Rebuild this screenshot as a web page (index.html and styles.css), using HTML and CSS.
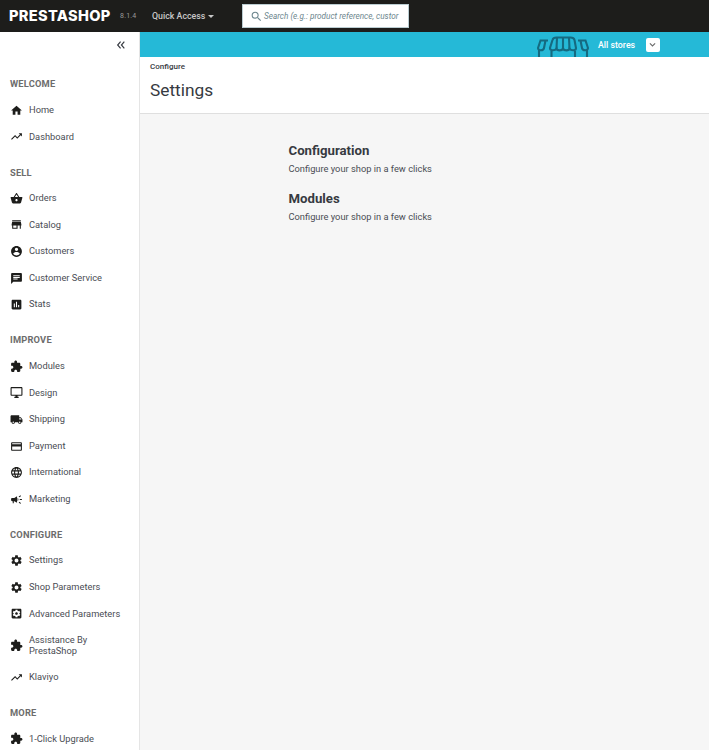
FILE: index.html
```html
<!DOCTYPE html>
<html lang="en">
<head>
  <meta charset="utf-8">
  <title>Settings</title>
  <link rel="stylesheet" href="styles.css">
</head>
<body>

<svg class="icon-defs" width="0" height="0">
  <symbol id="i-home" viewBox="0 0 24 24"><path d="M10 20v-6h4v6h5v-8h3L12 3 2 12h3v8z"/></symbol>
  <symbol id="i-trend" viewBox="0 0 24 24"><path d="M16 6l2.29 2.29-4.88 4.88-4-4L2 16.59 3.41 18l6-6 4 4 6.3-6.29L22 12V6z"/></symbol>
  <symbol id="i-basket" viewBox="0 0 24 24"><path d="M17.21 9l-4.38-6.56c-.19-.28-.51-.42-.83-.42-.32 0-.64.14-.83.43L6.79 9H2c-.55 0-1 .45-1 1 0 .09.01.18.04.27l2.54 9.27c.23.84 1 1.46 1.92 1.46h13c.92 0 1.69-.62 1.93-1.46l2.54-9.27L23 10c0-.55-.45-1-1-1h-4.79zM9 9l3-4.4L15 9H9zm3 8c-1.1 0-2-.9-2-2s.9-2 2-2 2 .9 2 2-.9 2-2 2z"/></symbol>
  <symbol id="i-store" viewBox="0 0 24 24"><path d="M20 4H4v2h16V4zm1 10v-2l-1-5H4l-1 5v2h1v6h10v-6h4v6h2v-6h1zm-9 4H6v-4h6v4z"/></symbol>
  <symbol id="i-account" viewBox="0 0 24 24"><path d="M12 2C6.48 2 2 6.48 2 12s4.48 10 10 10 10-4.48 10-10S17.52 2 12 2zm0 3c1.66 0 3 1.34 3 3s-1.34 3-3 3-3-1.34-3-3 1.34-3 3-3zm0 14.2c-2.5 0-4.71-1.28-6-3.22.03-1.99 4-3.08 6-3.08 1.99 0 5.97 1.09 6 3.08-1.29 1.94-3.5 3.22-6 3.22z"/></symbol>
  <symbol id="i-chat" viewBox="0 0 24 24"><path d="M20 2H4c-1.1 0-1.99.9-1.99 2L2 22l4-4h14c1.1 0 2-.9 2-2V4c0-1.1-.9-2-2-2zM6 9h12v2H6V9zm8 5H6v-2h8v2zm4-6H6V6h12v2z"/></symbol>
  <symbol id="i-stats" viewBox="0 0 24 24"><path d="M19 3H5c-1.1 0-2 .9-2 2v14c0 1.1.9 2 2 2h14c1.1 0 2-.9 2-2V5c0-1.1-.9-2-2-2zM9 17H7v-7h2v7zm4 0h-2V7h2v10zm4 0h-2v-4h2v4z"/></symbol>
  <symbol id="i-extension" viewBox="0 0 24 24"><path d="M20.5 11H19V7c0-1.1-.9-2-2-2h-4V3.5C13 2.12 11.88 1 10.5 1S8 2.12 8 3.5V5H4c-1.1 0-1.99.9-1.99 2v3.8H3.5c1.49 0 2.7 1.21 2.7 2.7s-1.21 2.7-2.7 2.7H2V20c0 1.1.9 2 2 2h3.8v-1.5c0-1.49 1.21-2.7 2.7-2.7 1.49 0 2.7 1.21 2.7 2.7V22H17c1.1 0 2-.9 2-2v-4h1.5c1.38 0 2.5-1.12 2.5-2.5S21.88 11 20.5 11z"/></symbol>
  <symbol id="i-desktop" viewBox="0 0 24 24"><path d="M21 2H3c-1.1 0-2 .9-2 2v12c0 1.1.9 2 2 2h7v2H8v2h8v-2h-2v-2h7c1.1 0 2-.9 2-2V4c0-1.1-.9-2-2-2zm0 14H3V4h18v12z"/></symbol>
  <symbol id="i-truck" viewBox="0 0 24 24"><path d="M20 8h-3V4H3c-1.1 0-2 .9-2 2v11h2c0 1.66 1.34 3 3 3s3-1.34 3-3h6c0 1.66 1.34 3 3 3s3-1.34 3-3h2v-5l-3-4zM6 18.5c-.83 0-1.5-.67-1.5-1.5s.67-1.5 1.5-1.5 1.5.67 1.5 1.5-.67 1.5-1.5 1.5zm13.5-9l1.96 2.5H17V9.5h2.5zm-1.5 9c-.83 0-1.5-.67-1.5-1.5s.67-1.5 1.5-1.5 1.5.67 1.5 1.5-.67 1.5-1.5 1.5z"/></symbol>
  <symbol id="i-card" viewBox="0 0 24 24"><path d="M20 4H4c-1.11 0-1.99.89-1.99 2L2 18c0 1.11.89 2 2 2h16c1.11 0 2-.89 2-2V6c0-1.11-.89-2-2-2zm0 14H4v-6h16v6zm0-10H4V6h16v2z"/></symbol>
  <symbol id="i-globe" viewBox="0 0 24 24"><path d="M11.99 2C6.47 2 2 6.48 2 12s4.47 10 9.99 10C17.52 22 22 17.52 22 12S17.52 2 11.99 2zm6.93 6h-2.95c-.32-1.25-.78-2.45-1.38-3.56 1.84.63 3.37 1.91 4.33 3.56zM12 4.04c.83 1.2 1.48 2.53 1.91 3.96h-3.82c.43-1.43 1.08-2.76 1.91-3.96zM4.26 14C4.1 13.36 4 12.69 4 12s.1-1.36.26-2h3.38c-.08.66-.14 1.32-.14 2 0 .68.06 1.34.14 2H4.26zm.82 2h2.95c.32 1.25.78 2.45 1.38 3.56-1.84-.63-3.37-1.9-4.33-3.56zm2.95-8H5.08c.96-1.66 2.49-2.93 4.33-3.56C8.81 5.55 8.35 6.75 8.03 8zM12 19.96c-.83-1.2-1.48-2.53-1.91-3.96h3.82c-.43 1.43-1.08 2.76-1.91 3.96zM14.34 14H9.66c-.09-.66-.16-1.32-.16-2 0-.68.07-1.35.16-2h4.68c.09.65.16 1.32.16 2 0 .68-.07 1.34-.16 2zm.25 5.56c.6-1.11 1.06-2.31 1.38-3.56h2.95c-.96 1.65-2.49 2.93-4.33 3.56zM16.36 14c.08-.66.14-1.32.14-2 0-.68-.06-1.34-.14-2h3.38c.16.64.26 1.31.26 2s-.1 1.36-.26 2h-3.38z"/></symbol>
  <symbol id="i-campaign" viewBox="0 0 24 24"><path d="M18 11v2h4v-2h-4zm-2 6.61c.96.71 2.21 1.65 3.2 2.39.4-.53.8-1.07 1.2-1.6-.99-.74-2.24-1.68-3.2-2.4-.4.54-.8 1.08-1.2 1.61zM20.4 5.6c-.4-.53-.8-1.07-1.2-1.6-.99.74-2.24 1.68-3.2 2.4.4.53.8 1.07 1.2 1.6.96-.72 2.21-1.65 3.2-2.4zM4 9c-1.1 0-2 .9-2 2v2c0 1.1.9 2 2 2h1v4h2v-4h1l5 3V6L8 9H4zm11.500 3c0-1.33-.58-2.53-1.5-3.35v6.69c.92-.81 1.5-2.01 1.5-3.34z"/></symbol>
  <symbol id="i-settings" viewBox="0 0 24 24"><path d="M19.14 12.94c.04-.3.06-.61.06-.94 0-.32-.02-.64-.07-.94l2.03-1.58c.18-.14.23-.41.12-.61l-1.92-3.32c-.12-.22-.37-.29-.59-.22l-2.39.96c-.5-.38-1.03-.7-1.62-.94l-.36-2.54c-.04-.24-.24-.41-.48-.41h-3.84c-.24 0-.43.17-.47.41l-.36 2.54c-.59.24-1.13.57-1.62.94l-2.39-.96c-.22-.08-.47 0-.59.22L2.74 8.87c-.12.21-.08.47.12.61l2.03 1.58c-.05.3-.09.63-.09.94s.02.64.07.94l-2.03 1.58c-.18.14-.23.41-.12.61l1.92 3.32c.12.22.37.29.59.22l2.39-.96c.5.38 1.03.7 1.62.94l.36 2.54c.05.24.24.41.48.41h3.84c.24 0 .44-.17.47-.41l.36-2.54c.59-.24 1.13-.56 1.62-.94l2.39.96c.22.08.47 0 .59-.22l1.92-3.32c.12-.22.07-.47-.12-.61l-2.01-1.58zM12 15.6c-1.98 0-3.6-1.62-3.6-3.6s1.62-3.6 3.6-3.6 3.6 1.62 3.6 3.6-1.62 3.6-3.6 3.6z"/></symbol>
  <symbol id="i-advanced" viewBox="0 0 24 24"><path d="M19 3H5c-1.11 0-2 .89-2 2v14c0 1.11.89 2 2 2h14c1.11 0 2-.89 2-2V5c0-1.11-.89-2-2-2zm-1.75 9c0 .23-.02.46-.05.68l1.48 1.16c.13.11.17.3.08.45l-1.4 2.42c-.09.15-.27.21-.43.15l-1.74-.7c-.36.28-.76.51-1.18.69l-.26 1.85c-.03.17-.18.3-.35.3h-2.8c-.17 0-.32-.13-.35-.29l-.26-1.85c-.43-.18-.82-.41-1.18-.69l-1.74.7c-.16.06-.34 0-.43-.15l-1.4-2.42c-.09-.15-.05-.34.08-.45l1.48-1.16c-.03-.23-.05-.46-.05-.69 0-.23.02-.46.05-.68l-1.48-1.16c-.13-.11-.17-.3-.08-.45l1.4-2.42c.09-.15.27-.21.43-.15l1.74.7c.36-.28.76-.51 1.18-.69l.26-1.85c.03-.17.18-.3.35-.3h2.8c.17 0 .32.13.35.29l.26 1.85c.43.18.82.41 1.18.69l1.74-.7c.16-.06.34 0 .43.15l1.4 2.42c.09.15.05.34-.08.45l-1.48 1.16c.03.23.05.46.05.69zM12 9.5c-1.38 0-2.5 1.12-2.5 2.5s1.12 2.5 2.5 2.5 2.5-1.12 2.5-2.5-1.12-2.5-2.5-2.5z"/></symbol>
</svg>

<header class="topbar">
  <span class="logo">PRESTASHOP</span>
  <span class="version">8.1.4</span>
  <span class="quick-access">Quick Access <i class="caret"></i></span>
  <div class="search">
    <svg class="search-icon" viewBox="0 0 24 24"><path d="M15.5 14h-.79l-.28-.27A6.47 6.47 0 0 0 16 9.5 6.5 6.5 0 1 0 9.5 16c1.61 0 3.09-.59 4.23-1.57l.27.28v.79l5 4.99L20.49 19l-4.99-5zm-6 0C7.01 14 5 11.99 5 9.5S7.01 5 9.5 5 14 7.01 14 9.5 11.99 14 9.5 14z"/></svg>
    <span class="search-text">Search (e.g.: product reference, custor</span>
  </div>
</header>

<div class="main">
  <nav class="sidebar">
    <div class="collapse">
      <svg viewBox="0 0 12 12"><path d="M5.500 2 2 6l3.500 4M10 2 6.500 6l3.500 4"/></svg>
    </div>

    <h6 class="nav-title">WELCOME</h6>
    <a class="nav-item"><svg><use href="#i-home"/></svg><span>Home</span></a>
    <a class="nav-item"><svg><use href="#i-trend"/></svg><span>Dashboard</span></a>

    <h6 class="nav-title">SELL</h6>
    <a class="nav-item"><svg><use href="#i-basket"/></svg><span>Orders</span></a>
    <a class="nav-item"><svg><use href="#i-store"/></svg><span>Catalog</span></a>
    <a class="nav-item"><svg><use href="#i-account"/></svg><span>Customers</span></a>
    <a class="nav-item"><svg><use href="#i-chat"/></svg><span>Customer Service</span></a>
    <a class="nav-item"><svg><use href="#i-stats"/></svg><span>Stats</span></a>

    <h6 class="nav-title">IMPROVE</h6>
    <a class="nav-item"><svg><use href="#i-extension"/></svg><span>Modules</span></a>
    <a class="nav-item"><svg><use href="#i-desktop"/></svg><span>Design</span></a>
    <a class="nav-item"><svg><use href="#i-truck"/></svg><span>Shipping</span></a>
    <a class="nav-item"><svg><use href="#i-card"/></svg><span>Payment</span></a>
    <a class="nav-item"><svg><use href="#i-globe"/></svg><span>International</span></a>
    <a class="nav-item"><svg><use href="#i-campaign"/></svg><span>Marketing</span></a>

    <h6 class="nav-title">CONFIGURE</h6>
    <a class="nav-item"><svg><use href="#i-settings"/></svg><span>Settings</span></a>
    <a class="nav-item"><svg><use href="#i-settings"/></svg><span>Shop Parameters</span></a>
    <a class="nav-item"><svg><use href="#i-advanced"/></svg><span>Advanced Parameters</span></a>
    <a class="nav-item nav-item-wrap"><svg><use href="#i-extension"/></svg><span>Assistance By<br>PrestaShop</span></a>
    <a class="nav-item"><svg><use href="#i-trend"/></svg><span>Klaviyo</span></a>

    <h6 class="nav-title">MORE</h6>
    <a class="nav-item"><svg><use href="#i-extension"/></svg><span>1-Click Upgrade</span></a>
  </nav>

  <div class="content">
    <div class="banner">
      <svg class="shop-icon" viewBox="0 0 54 25">
        <path d="M12 8.500H4.500L2 16c.3 3 5.500 3 6 0l1.500-7.500M3 18v7M42 8.500h7.500L52 16c-.3 3-5.500 3-6 0l-1.500-7.500M51 18v7"/>
        <path d="M16.500 8c.5-2 2-2.500 4-2.500h14c2 0 3.500.5 4 2.500l1.500 8c0 3-5 3-6.500.5-.5 2.500-5.500 2.500-6.500 0-1 2.500-6 2.500-6.500 0-1.500 2.500-6.500 2.500-6.500-.5z"/>
        <path d="M15.500 19v6M39 19v6M21 6l-.5 10.500M27 6v10.500M33 6l.5 10.500"/>
      </svg>
      <span class="all-stores">All stores</span>
      <span class="store-select"><svg viewBox="0 0 12 12"><path d="M2.500 4.500 6 8l3.500-3.500"/></svg></span>
    </div>

    <div class="page-head">
      <div class="breadcrumb">Configure</div>
      <h1 class="page-title">Settings</h1>
    </div>

    <div class="settings-list">
      <h2>Configuration</h2>
      <p>Configure your shop in a few clicks</p>
      <h2>Modules</h2>
      <p>Configure your shop in a few clicks</p>
    </div>
  </div>
</div>

</body>
</html>
```

FILE: styles.css
```css
* {
  box-sizing: border-box;
}

body {
  margin: 0;
  height: 750px;
  overflow: hidden;
  font-family: Roboto, "Noto Sans", sans-serif;
  color: #363a41;
  background: #f6f6f6;
  display: flex;
  flex-direction: column;
}

.icon-defs {
  position: absolute;
}

/* top bar */
.topbar {
  height: 32px;
  flex: none;
  background: #1d1d1b;
  display: flex;
  align-items: center;
  padding-left: 9px;
}

.logo {
  font-family: Inter, "Liberation Sans", sans-serif;
  font-weight: 800;
  font-size: 14.600px;
  letter-spacing: 0.3px;
  color: #fff;
  width: 111px;
}

.version {
  font-size: 7px;
  letter-spacing: 0.2px;
  color: #9a9a9a;
  width: 32px;
}

.quick-access {
  font-size: 8.800px;
  font-weight: 500;
  color: #c8c8c8;
  width: 90px;
  display: flex;
  align-items: center;
  gap: 3px;
}

.caret {
  border-top: 3px solid #c8c8c8;
  border-left: 3px solid transparent;
  border-right: 3px solid transparent;
  margin-top: 1px;
}

.search {
  width: 167px;
  height: 24px;
  background: #fff;
  border: 1px solid #bbcdd2;
  display: flex;
  align-items: center;
  padding-left: 7px;
  gap: 1px;
}

.search-icon {
  width: 13px;
  height: 13px;
  flex: none;
  fill: #6c868e;
}

.search-text {
  font-size: 8.200px;
  font-style: italic;
  color: #6c868e;
  white-space: nowrap;
}

/* sidebar */
.main {
  flex: 1;
  display: flex;
  min-height: 0;
}

.sidebar {
  width: 140px;
  flex: none;
  background: #fff;
  border-right: 1px solid #e5e5e5;
  overflow: hidden;
}

.collapse {
  height: 30.100px;
  padding: 8px 13px 0 0;
  display: flex;
  justify-content: flex-end;
  align-items: flex-start;
}

.collapse svg {
  width: 10px;
  height: 10px;
  fill: none;
  stroke: #363a41;
  stroke-width: 1.400;
}

.nav-title {
  margin: 0;
  height: 34.900px;
  padding: 14.400px 0 0 10px;
  font-size: 9.300px;
  line-height: 15px;
  font-weight: 700;
  letter-spacing: 0.2px;
  color: #6c6c6c;
}

.nav-item {
  display: flex;
  align-items: center;
  min-height: 26.600px;
  padding-left: 10px;
  gap: 6px;
  font-size: 9.300px;
  line-height: 10.500px;
  color: #4a4d54;
}

.nav-item svg {
  width: 13px;
  height: 13px;
  flex: none;
  fill: #1d1d1b;
}

.nav-item-wrap {
  min-height: 37px;
}

/* content */
.content {
  flex: 1;
  min-width: 0;
}

.banner {
  height: 25px;
  background: #25b9d7;
  display: flex;
  align-items: flex-start;
  overflow: hidden;
  padding-left: 396px;
}

.shop-icon {
  width: 54px;
  height: 25px;
  flex: none;
  fill: none;
  stroke: #156a80;
  stroke-width: 2.100;
}

.all-stores {
  margin-left: 8px;
  font-size: 8.800px;
  line-height: 26px;
  font-weight: 500;
  color: #fff;
}

.store-select {
  margin: 6px 0 0 11px;
  width: 13.500px;
  height: 13.500px;
  background: #fff;
  border-radius: 2px;
  display: flex;
  align-items: center;
  justify-content: center;
}

.store-select svg {
  width: 9px;
  height: 9px;
  fill: none;
  stroke: #6c6c6c;
  stroke-width: 1.500;
}

.page-head {
  height: 57px;
  background: #fff;
  border-bottom: 1px solid #dfdfdf;
  padding: 5px 0 0 10px;
}

.breadcrumb {
  font-size: 8px;
  line-height: 10px;
  font-weight: 500;
  color: #363a41;
}

.page-title {
  margin: 7px 0 0;
  font-size: 17.300px;
  line-height: 22px;
  font-weight: 400;
  color: #363a41;
}

.settings-list {
  padding: 28px 0 0 148.500px;
}

.settings-list h2 {
  margin: 0;
  font-size: 13.200px;
  line-height: 18px;
  font-weight: 700;
  color: #363a41;
}

.settings-list p {
  margin: 2px 0 15px;
  font-size: 9.300px;
  line-height: 13px;
  color: #4a4d54;
}
```
